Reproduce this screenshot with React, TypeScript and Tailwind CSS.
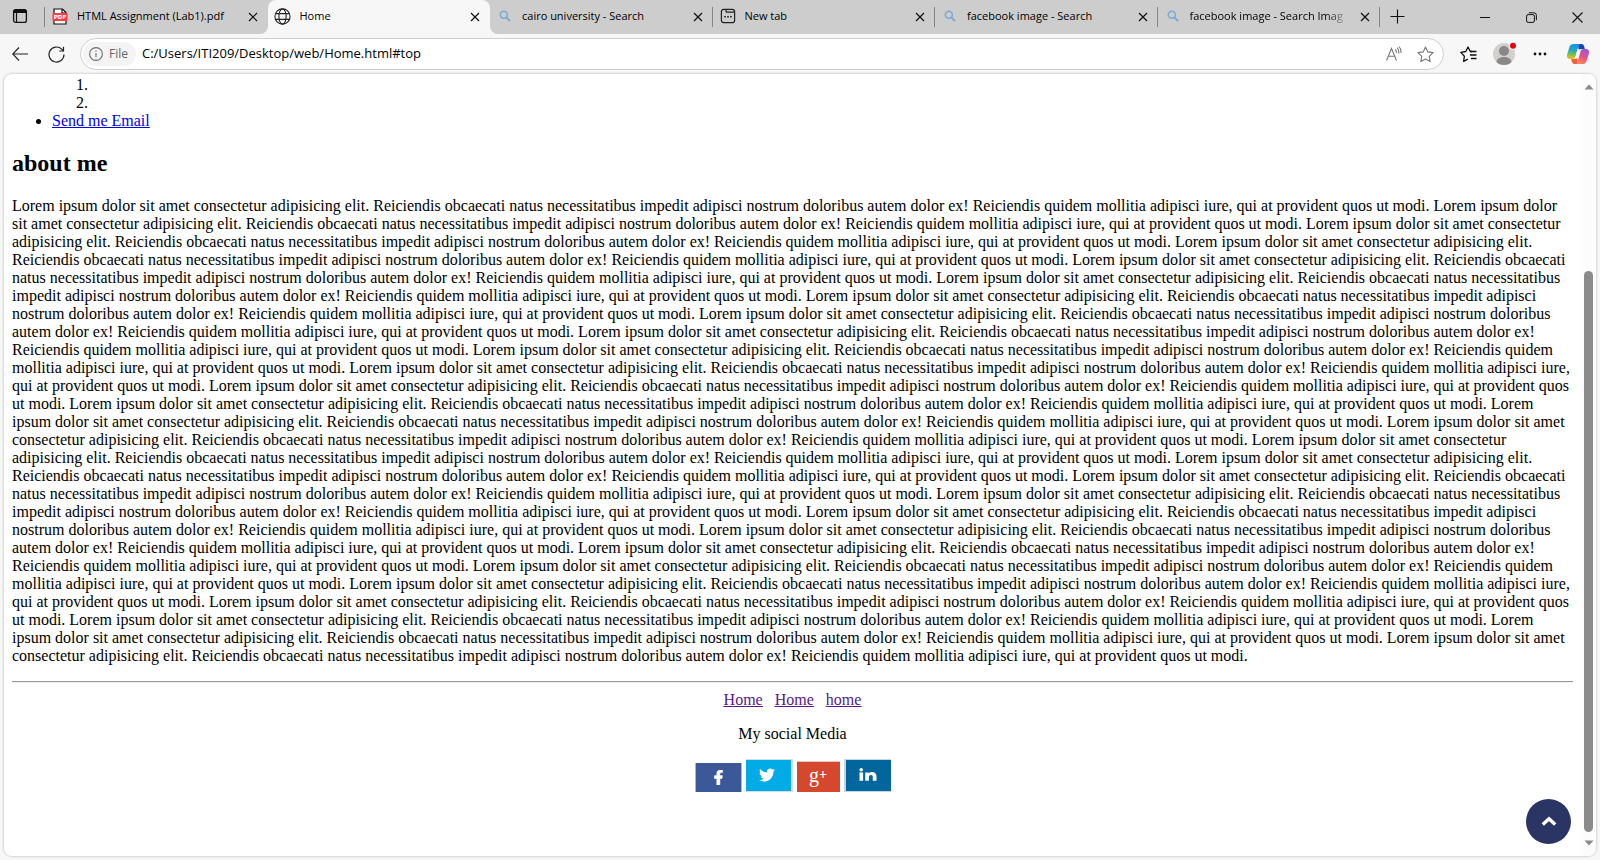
import React from "react";
import { FaFacebookF, FaTwitter } from "react-icons/fa";

const SENTENCE =
  "Lorem ipsum dolor sit amet consectetur adipisicing elit. Reiciendis obcaecati natus necessitatibus impedit adipisci nostrum doloribus autem dolor ex! Reiciendis quidem mollitia adipisci iure, qui at provident quos ut modi.";
const ABOUT = Array.from({ length: 28 }, () => SENTENCE).join(" ");

function CloseIcon() {
  return (
    <svg width="10" height="10" viewBox="0 0 10 10" fill="none" stroke="#111" strokeWidth="1.2" aria-hidden="true">
      <path d="M1 1l8 8M9 1L1 9" />
    </svg>
  );
}

function PdfIcon() {
  return (
    <svg width="16" height="17" viewBox="0 0 16 17" aria-hidden="true">
      <path d="M2 1h8.5L14 4.5V16H2z" fill="#fff" stroke="#111" strokeWidth="1.2" />
      <path d="M10 1v4h4" fill="none" stroke="#111" strokeWidth="1.2" />
      <rect x="0.5" y="5" width="15" height="8" rx="0.8" fill="#f8403f" />
      <text x="8" y="11.2" textAnchor="middle" fontSize="5.6" fontWeight="700" fill="#fff" fontFamily="DejaVu Sans, sans-serif">
        PDF
      </text>
    </svg>
  );
}

function GlobeIcon() {
  return (
    <svg width="17" height="17" viewBox="0 0 17 17" fill="none" stroke="#222" strokeWidth="1.1" aria-hidden="true">
      <circle cx="8.5" cy="8.5" r="7.6" />
      <ellipse cx="8.5" cy="8.5" rx="3.6" ry="7.6" />
      <path d="M1.7 5.6h13.6M1.7 11.4h13.6" />
    </svg>
  );
}

function SearchIcon() {
  return (
    <svg width="16" height="16" viewBox="0 0 16 16" fill="none" stroke="#79a9d4" aria-hidden="true">
      <circle cx="6.8" cy="6.8" r="3.5" strokeWidth="1.5" />
      <path d="M9.5 9.5l3.6 3.6" strokeWidth="1.9" />
    </svg>
  );
}

function NewTabIcon() {
  return (
    <svg width="16" height="16" viewBox="0 0 16 16" fill="none" stroke="#222" strokeWidth="1.2" aria-hidden="true">
      <rect x="1.4" y="1.4" width="13.2" height="13.2" rx="2.2" />
      <path d="M6 1.6v1.6a1 1 0 0 0 1 1h7.4" />
      <path d="M4.2 8.7h1.6M7.2 8.7h1.6M10.2 8.7h1.6" strokeWidth="1.6" />
    </svg>
  );
}

type TabInfo = {
  title: string;
  icon: React.ReactNode;
  active?: boolean;
  divider?: boolean;
  fade?: boolean;
};

const TABS: TabInfo[] = [
  { title: "HTML Assignment (Lab1).pdf", icon: <PdfIcon /> },
  { title: "Home", icon: <GlobeIcon />, active: true },
  { title: "cairo university - Search", icon: <SearchIcon />, divider: true },
  { title: "New tab", icon: <NewTabIcon />, divider: true },
  { title: "facebook image - Search", icon: <SearchIcon />, divider: true },
  { title: "facebook image - Search Imag", icon: <SearchIcon />, divider: true, fade: true },
];

function Tab({ title, icon, active, divider, fade }: TabInfo) {
  return (
    <div className={active ? "relative flex min-w-0 flex-1 items-center rounded-t-lg bg-[#f7f7f7]" : "relative flex min-w-0 flex-1 items-center"}>
      <button type="button" role="tab" aria-selected={!!active} className="flex h-full min-w-0 flex-1 items-center gap-2 pb-0.5 pl-1.5 text-left">
        <span className="flex w-[18px] shrink-0 justify-center">{icon}</span>
        <span
          className={
            fade
              ? "min-w-0 flex-1 overflow-hidden whitespace-nowrap [mask-image:linear-gradient(to_right,black_85%,transparent)]"
              : "min-w-0 flex-1 overflow-hidden whitespace-nowrap"
          }
        >
          {title}
        </span>
      </button>
      <button type="button" aria-label={"Close " + title} className="flex h-6 w-[30px] shrink-0 items-center justify-center">
        <CloseIcon />
      </button>
      {divider && <span className="absolute top-[7px] right-0 h-5 w-px bg-[#858585]" />}
      {active && (
        <>
          <svg className="absolute bottom-0 -left-2" width="8" height="8" viewBox="0 0 8 8" aria-hidden="true">
            <path d="M8 0v8H0a8 8 0 0 0 8-8z" fill="#f7f7f7" />
          </svg>
          <svg className="absolute -right-2 bottom-0" width="8" height="8" viewBox="0 0 8 8" aria-hidden="true">
            <path d="M0 0v8h8a8 8 0 0 1-8-8z" fill="#f7f7f7" />
          </svg>
        </>
      )}
    </div>
  );
}

function TabStrip() {
  return (
    <header className="flex h-[34px] bg-[#cdcdcd] text-[11px] text-black">
      <button type="button" aria-label="Tab actions" className="relative flex w-[45px] shrink-0 items-center pb-0.5 pl-3">
        <svg width="16" height="16" viewBox="0 0 16 16" aria-hidden="true">
          <rect x="1.6" y="1.6" width="12.8" height="12.8" rx="2" fill="none" stroke="#111" strokeWidth="1.3" />
          <path d="M1.5 5V3.5a2 2 0 0 1 2-2h9a2 2 0 0 1 2 2V5z" fill="#111" />
          <path d="M4.5 5v9" stroke="#111" strokeWidth="1.2" />
        </svg>
        <span className="absolute top-[7px] right-0 h-5 w-px bg-[#858585]" />
      </button>
      <div role="tablist" className="flex min-w-0 shrink basis-[1335px]">
        {TABS.map((tab) => (
          <Tab key={tab.title} {...tab} />
        ))}
      </div>
      <button type="button" aria-label="New tab" className="flex w-[34px] shrink-0 items-center justify-center pb-0.5">
        <svg width="15" height="15" viewBox="0 0 15 15" stroke="#111" strokeWidth="1.1" aria-hidden="true">
          <path d="M7.5 0.5v14M0.5 7.5h14" />
        </svg>
      </button>
      <div className="ml-auto flex shrink-0">
        <button type="button" aria-label="Minimize" className="flex w-[46px] items-center justify-center">
          <svg width="10" height="10" viewBox="0 0 10 10" stroke="#111" aria-hidden="true">
            <path d="M0 5.5h10" />
          </svg>
        </button>
        <button type="button" aria-label="Restore" className="flex w-[46px] items-center justify-center">
          <svg width="11" height="11" viewBox="0 0 11 11" fill="none" stroke="#111" aria-hidden="true">
            <rect x="0.6" y="2.6" width="7.8" height="7.8" rx="1.5" />
            <path d="M2.8 0.8h5a2.6 2.6 0 0 1 2.6 2.6v4.8" />
          </svg>
        </button>
        <button type="button" aria-label="Close window" className="flex w-[46px] items-center justify-center">
          <svg width="11" height="11" viewBox="0 0 11 11" stroke="#111" strokeWidth="1.1" aria-hidden="true">
            <path d="M0.5 0.5l10 10M10.5 0.5l-10 10" />
          </svg>
        </button>
      </div>
    </header>
  );
}

function CopilotIcon() {
  return (
    <svg width="24" height="24" viewBox="0 0 24 24" aria-hidden="true">
      <defs>
        <linearGradient id="cpLeft" x1="0.5" y1="0" x2="0.4" y2="1">
          <stop offset="0" stopColor="#1a8fe8" />
          <stop offset="0.4" stopColor="#22a6c8" />
          <stop offset="0.72" stopColor="#7cc04c" />
          <stop offset="1" stopColor="#f2c11d" />
        </linearGradient>
        <linearGradient id="cpRight" x1="0.7" y1="0" x2="0.3" y2="1">
          <stop offset="0" stopColor="#9a55ea" />
          <stop offset="0.45" stopColor="#e0508c" />
          <stop offset="1" stopColor="#ff8b5c" />
        </linearGradient>
      </defs>
      <path d="M12 2h3.6c1.3 0 2 .8 2.4 2l.9 3h-3.4c-1.6 0-2.3.9-2.7 2.2z" fill="#1745b8" />
      <path d="M12 22H8.4c-1.3 0-2-.8-2.4-2l-.9-3h3.4c1.6 0 2.3-.9 2.7-2.2z" fill="#f0603c" />
      <path d="M7.7 2h7.1c-1.4 0-2 1-2.4 2.4L9.7 14c-.6 2-1.4 3-3.2 3H4c-2.6 0-3.6-1.9-2.9-4.5l2.4-7.700C4.200 2.900 5.400 2 7.700 2z" fill="url(#cpLeft)" />
      <path d="M16.300 22H9.200c1.400 0 2-1 2.400-2.400L14.300 10c.6-2 1.400-3 3.200-3H20c2.600 0 3.600 1.900 2.900 4.500l-2.400 7.700c-.7 1.900-1.900 2.800-4.200 2.800z" fill="url(#cpRight)" />
      <path d="M13.700 7.600h-2.300L9.800 13.600c-.3 1.200-.7 2.200-1.300 2.900h2.900l1.500-5.700c.3-1.300.8-2.400 1.500-3.200z" fill="#fff" />
    </svg>
  );
}

function Toolbar() {
  return (
    <nav aria-label="Browser toolbar" className="flex h-10 items-center bg-[#f7f7f7]">
      <button type="button" aria-label="Back" className="flex h-8 w-10 shrink-0 items-center justify-center">
        <svg width="16" height="14" viewBox="0 0 16 14" fill="none" stroke="#222" strokeWidth="1.1" aria-hidden="true">
          <path d="M16 7H0.8M7 0.5L0.7 7L7 13.5" />
        </svg>
      </button>
      <button type="button" aria-label="Refresh" className="flex h-8 w-8 shrink-0 items-center justify-center">
        <svg width="17" height="17" viewBox="0 0 17 17" fill="none" stroke="#222" strokeWidth="1.2" aria-hidden="true">
          <path d="M16 8.5a7.5 7.5 0 1 1-2.3-5.4L15.5 5" />
          <path d="M15.5 0.8V5H11.3" />
        </svg>
      </button>
      <div className="ml-2 flex h-8 min-w-0 flex-1 items-center rounded-full border border-[#cfcfcf] bg-white pr-0.5 pl-0.5">
        <button type="button" className="flex h-6 shrink-0 items-center gap-1.5 rounded-full bg-[#f4f4f4] pr-2 pl-1.5 text-xs text-[#666]">
          <svg width="14" height="14" viewBox="0 0 14 14" fill="none" stroke="#6e6e6e" strokeWidth="1.1" aria-hidden="true">
            <circle cx="7" cy="7" r="6.4" />
            <path d="M7 6v4.2M7 3.6v1.2" />
          </svg>
          File
        </button>
        <input
          aria-label="Address"
          type="text"
          defaultValue="C:/Users/ITI209/Desktop/web/Home.html#top"
          className="ml-1.5 min-w-0 flex-1 bg-transparent text-[13px] text-black outline-none"
        />
        <button type="button" aria-label="Read aloud" className="flex h-7 w-8 shrink-0 items-center justify-center">
          <svg width="17" height="16" viewBox="0 0 17 16" fill="none" stroke="#777" strokeWidth="1.1" aria-hidden="true">
            <path d="M1.5 14.5L6.5 2.5L11.5 14.5M3.3 10.2h6.4" />
            <path d="M10.2 3.4a3.5 3.5 0 0 1 1 3.6M12 1.6a6 6 0 0 1 1.600 5.900M14 0.500a8 8 0 0 1 1.900 6.500" />
          </svg>
        </button>
        <button type="button" aria-label="Add to favorites" className="flex h-7 w-8 shrink-0 items-center justify-center">
          <svg width="17" height="17" viewBox="0 0 17 17" fill="none" stroke="#777" strokeWidth="1.1" strokeLinejoin="round" aria-hidden="true">
            <path d="M8.5 1l2.3 4.9 5.3.7-3.9 3.7 1 5.3-4.7-2.6-4.7 2.6 1-5.3L.9 6.6l5.3-.7z" />
          </svg>
        </button>
      </div>
      <button type="button" aria-label="Favorites" className="ml-1.5 flex h-8 w-9 shrink-0 items-center justify-center">
        <svg width="17" height="17" viewBox="0 0 17 17" fill="none" stroke="#111" strokeWidth="1.3" strokeLinejoin="round" aria-hidden="true">
          <path d="M12.2 5.5H10.3L8 1L5.8 5.5L0.8 6.4l3.6 3.8-.8 5.2 4.2-2.2" />
          <path d="M10 5.5h6.5M10 9h6.5M11 12.5h5.5" />
        </svg>
      </button>
      <button type="button" aria-label="Profile" className="flex h-8 w-9 shrink-0 items-center justify-center">
        <svg width="24" height="24" viewBox="0 0 24 24" aria-hidden="true">
          <defs>
            <clipPath id="avatar">
              <circle cx="12" cy="12" r="11" />
            </clipPath>
          </defs>
          <circle cx="12" cy="12" r="11" fill="#d2d0ce" />
          <circle cx="12" cy="9" r="5" fill="#8a8886" />
          <ellipse cx="12" cy="20" rx="7.6" ry="5" fill="#8a8886" clipPath="url(#avatar)" />
          <circle cx="21" cy="3.8" r="4" fill="#f7f7f7" />
          <circle cx="21" cy="3.8" r="3" fill="#e60012" />
        </svg>
      </button>
      <button type="button" aria-label="Settings and more" className="flex h-8 w-9 shrink-0 items-center justify-center">
        <svg width="14" height="4" viewBox="0 0 14 4" fill="#111" aria-hidden="true">
          <circle cx="2" cy="2" r="1.4" />
          <circle cx="7" cy="2" r="1.4" />
          <circle cx="12" cy="2" r="1.4" />
        </svg>
      </button>
      <button type="button" aria-label="Copilot" className="mr-0.5 flex h-8 w-10 shrink-0 items-center justify-center">
        <CopilotIcon />
      </button>
    </nav>
  );
}

function Scrollbar() {
  return (
    <div aria-hidden="true" className="flex w-[15px] shrink-0 flex-col items-center bg-[#fcfcfc] py-2.5">
      <svg width="10" height="6" viewBox="0 0 10 6">
        <path d="M5 0.5L9.5 5.5h-9z" fill="#8a8a8a" />
      </svg>
      <div className="flex-[181]" />
      <div className="w-[9px] flex-[562] rounded-full bg-[#8b8b8b]" />
      <div className="h-2 shrink-0" />
      <svg width="10" height="6" viewBox="0 0 10 6">
        <path d="M5 5.5L0.5 0.5h9z" fill="#8a8a8a" />
      </svg>
    </div>
  );
}

function Document() {
  return (
    <main className="relative min-w-0 flex-1 px-2 pt-0.5 font-['Liberation_Serif',serif] text-base leading-[18px] text-black">
      <ul className="list-disc pl-10">
        <li className="list-none">
          <ol className="list-decimal pl-10">
            <li className="h-[18px]" />
            <li className="h-[18px]" />
          </ol>
        </li>
        <li>
          <a href="mailto:" className="text-[#0000ee] underline">
            Send me Email
          </a>
        </li>
      </ul>
      <h2 className="my-5 text-2xl leading-[27px] font-bold">about me</h2>
      <p className="my-4">{ABOUT}</p>
      <hr className="my-2 h-0.5 border-t border-b border-t-[#9a9a9a] border-b-[#eeeeee]" />
      <footer>
        <nav aria-label="Footer" className="flex justify-center gap-3 text-[#551a8b] underline">
          <a href="#top">Home</a>
          <a href="#top">Home</a>
          <a href="#top">home</a>
        </nav>
        <p className="my-4 text-center">My social Media</p>
        <div className="flex items-end justify-center gap-1 text-white">
          <a href="#facebook" aria-label="Facebook" className="flex h-[29px] w-[47px] items-center justify-center border-r border-l border-[#a9b5d3] bg-[#3b5998]">
            <FaFacebookF size={15} stroke="#fff" strokeWidth={24} />
          </a>
          <a href="#twitter" aria-label="Twitter" className="flex h-[33px] w-[47px] items-center justify-center border-t border-r-2 border-b border-[#d5dde2] bg-[#00abe6] pr-0.5 pb-0.5">
            <FaTwitter size={16} />
          </a>
          <a
            href="#google"
            aria-label="Google plus"
            className="flex h-[31px] w-[43px] items-center justify-center border-t border-[#e5c5bd] bg-[#d4492d] pb-1 text-xl leading-none"
          >
            g<span className="text-sm leading-none font-bold">+</span>
          </a>
          <a href="#linkedin" aria-label="LinkedIn" className="flex h-[33px] w-[47px] items-center justify-center border-t border-b border-l-2 border-[#c3d5e0] bg-[#00669c] pb-0.5">
            <svg width="18" height="13" viewBox="0 0 18 13" fill="#fff" aria-hidden="true">
              <circle cx="2.2" cy="1.8" r="1.8" />
              <rect x="0.5" y="4.4" width="3.6" height="8.4" />
              <path d="M6.200 4.400h3.500v1.200c.6-.9 1.600-1.500 3.200-1.500 3 0 4.600 1.600 4.600 4.500v4.200h-3.700V9c0-1.300-.5-2-1.800-2S9.900 7.700 9.900 9v3.800H6.200z" />
            </svg>
          </a>
        </div>
      </footer>
      <a href="#top" aria-label="Back to top" className="absolute right-2.5 bottom-3 flex size-[45px] items-center justify-center rounded-full bg-[#2a3563] pb-0.5">
        <svg width="16" height="10" viewBox="0 0 16 10" fill="none" stroke="#fff" strokeWidth="3.4" aria-hidden="true">
          <path d="M1.8 8.5L8 2.8l6.2 5.7" />
        </svg>
      </a>
    </main>
  );
}

export default function App() {
  return (
    <div className="flex min-h-screen flex-col bg-[#f7f7f7] font-['Open_Sans','Noto_Sans',sans-serif]">
      <TabStrip />
      <Toolbar />
      <div className="mx-1 mb-1 flex flex-1 overflow-hidden rounded-lg bg-white shadow-[0_0_2px_1px_rgba(0,0,0,0.14)]">
        <Document />
        <Scrollbar />
      </div>
    </div>
  );
}
